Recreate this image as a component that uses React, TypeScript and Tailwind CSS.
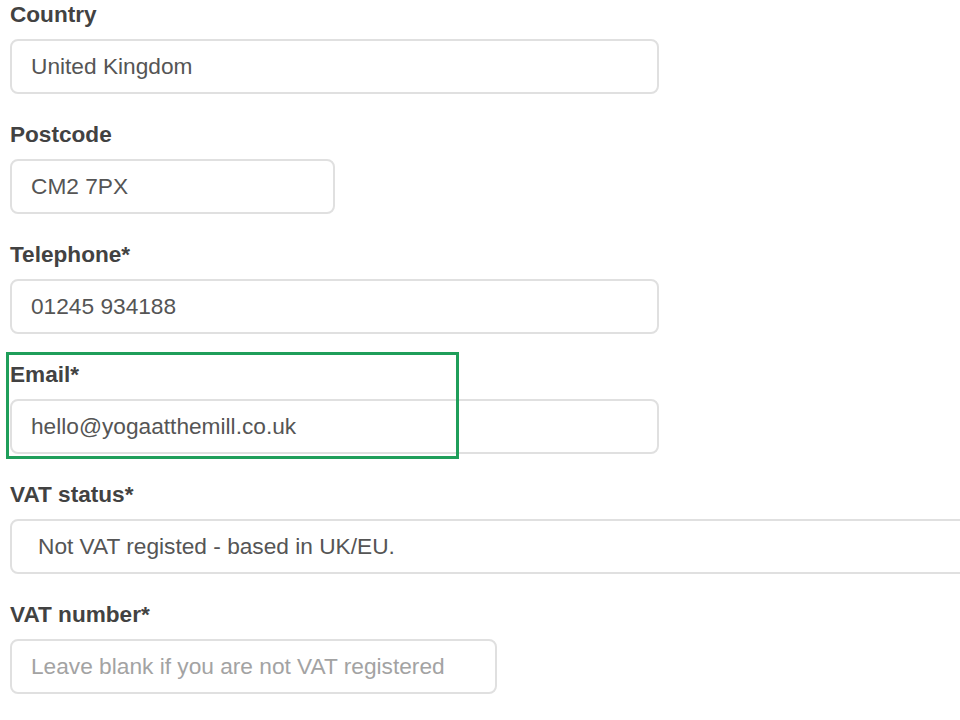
const fieldInput =
  'block h-[55px] rounded-lg border-2 border-[#e0e0e0] bg-white pl-[19px] text-[22.7px] text-[#555] outline-none placeholder:text-[#a3a3a3]';

const Label = ({ children }: { children: React.ReactNode }) => (
  <label className="block h-[30px] mb-[9px] text-[22.6px] leading-[30px] font-bold text-[#424242]">
    {children}
  </label>
);

export default function App() {
  return (
    <div
      className="min-h-screen w-[960px] overflow-hidden bg-white pl-[10px] pt-0"
      style={{ fontFamily: '"Liberation Sans", Arial, sans-serif' }}
    >
      <div className="flex flex-col gap-[26px]">
        {/* Country */}
        <div>
          <Label>Country</Label>
          <input className={`${fieldInput} w-[649px]`} defaultValue="United Kingdom" />
        </div>

        {/* Postcode */}
        <div>
          <Label>Postcode</Label>
          <input className={`${fieldInput} w-[325px]`} defaultValue="CM2 7PX" />
        </div>

        {/* Telephone */}
        <div>
          <Label>Telephone*</Label>
          <input className={`${fieldInput} w-[649px]`} defaultValue="01245 934188" />
        </div>

        {/* Email - highlighted */}
        <div className="relative">
          <Label>Email*</Label>
          <input className={`${fieldInput} w-[649px]`} defaultValue="hello@yogaatthemill.co.uk" />
          <div className="pointer-events-none absolute -top-[8px] -left-[4px] h-[107px] w-[453px] border-[3px] border-[#1f9e5a]" />
        </div>

        {/* VAT status */}
        <div>
          <Label>VAT status*</Label>
          <div className="flex h-[55px] w-[1000px] items-center rounded-lg border-2 border-[#e0e0e0] bg-white pl-[26px] text-[22.7px] text-[#555]">
            Not VAT registed - based in UK/EU.
          </div>
        </div>

        {/* VAT number */}
        <div>
          <Label>VAT number*</Label>
          <input
            className={`${fieldInput} w-[487px]`}
            placeholder="Leave blank if you are not VAT registered"
          />
        </div>
      </div>
    </div>
  );
}
